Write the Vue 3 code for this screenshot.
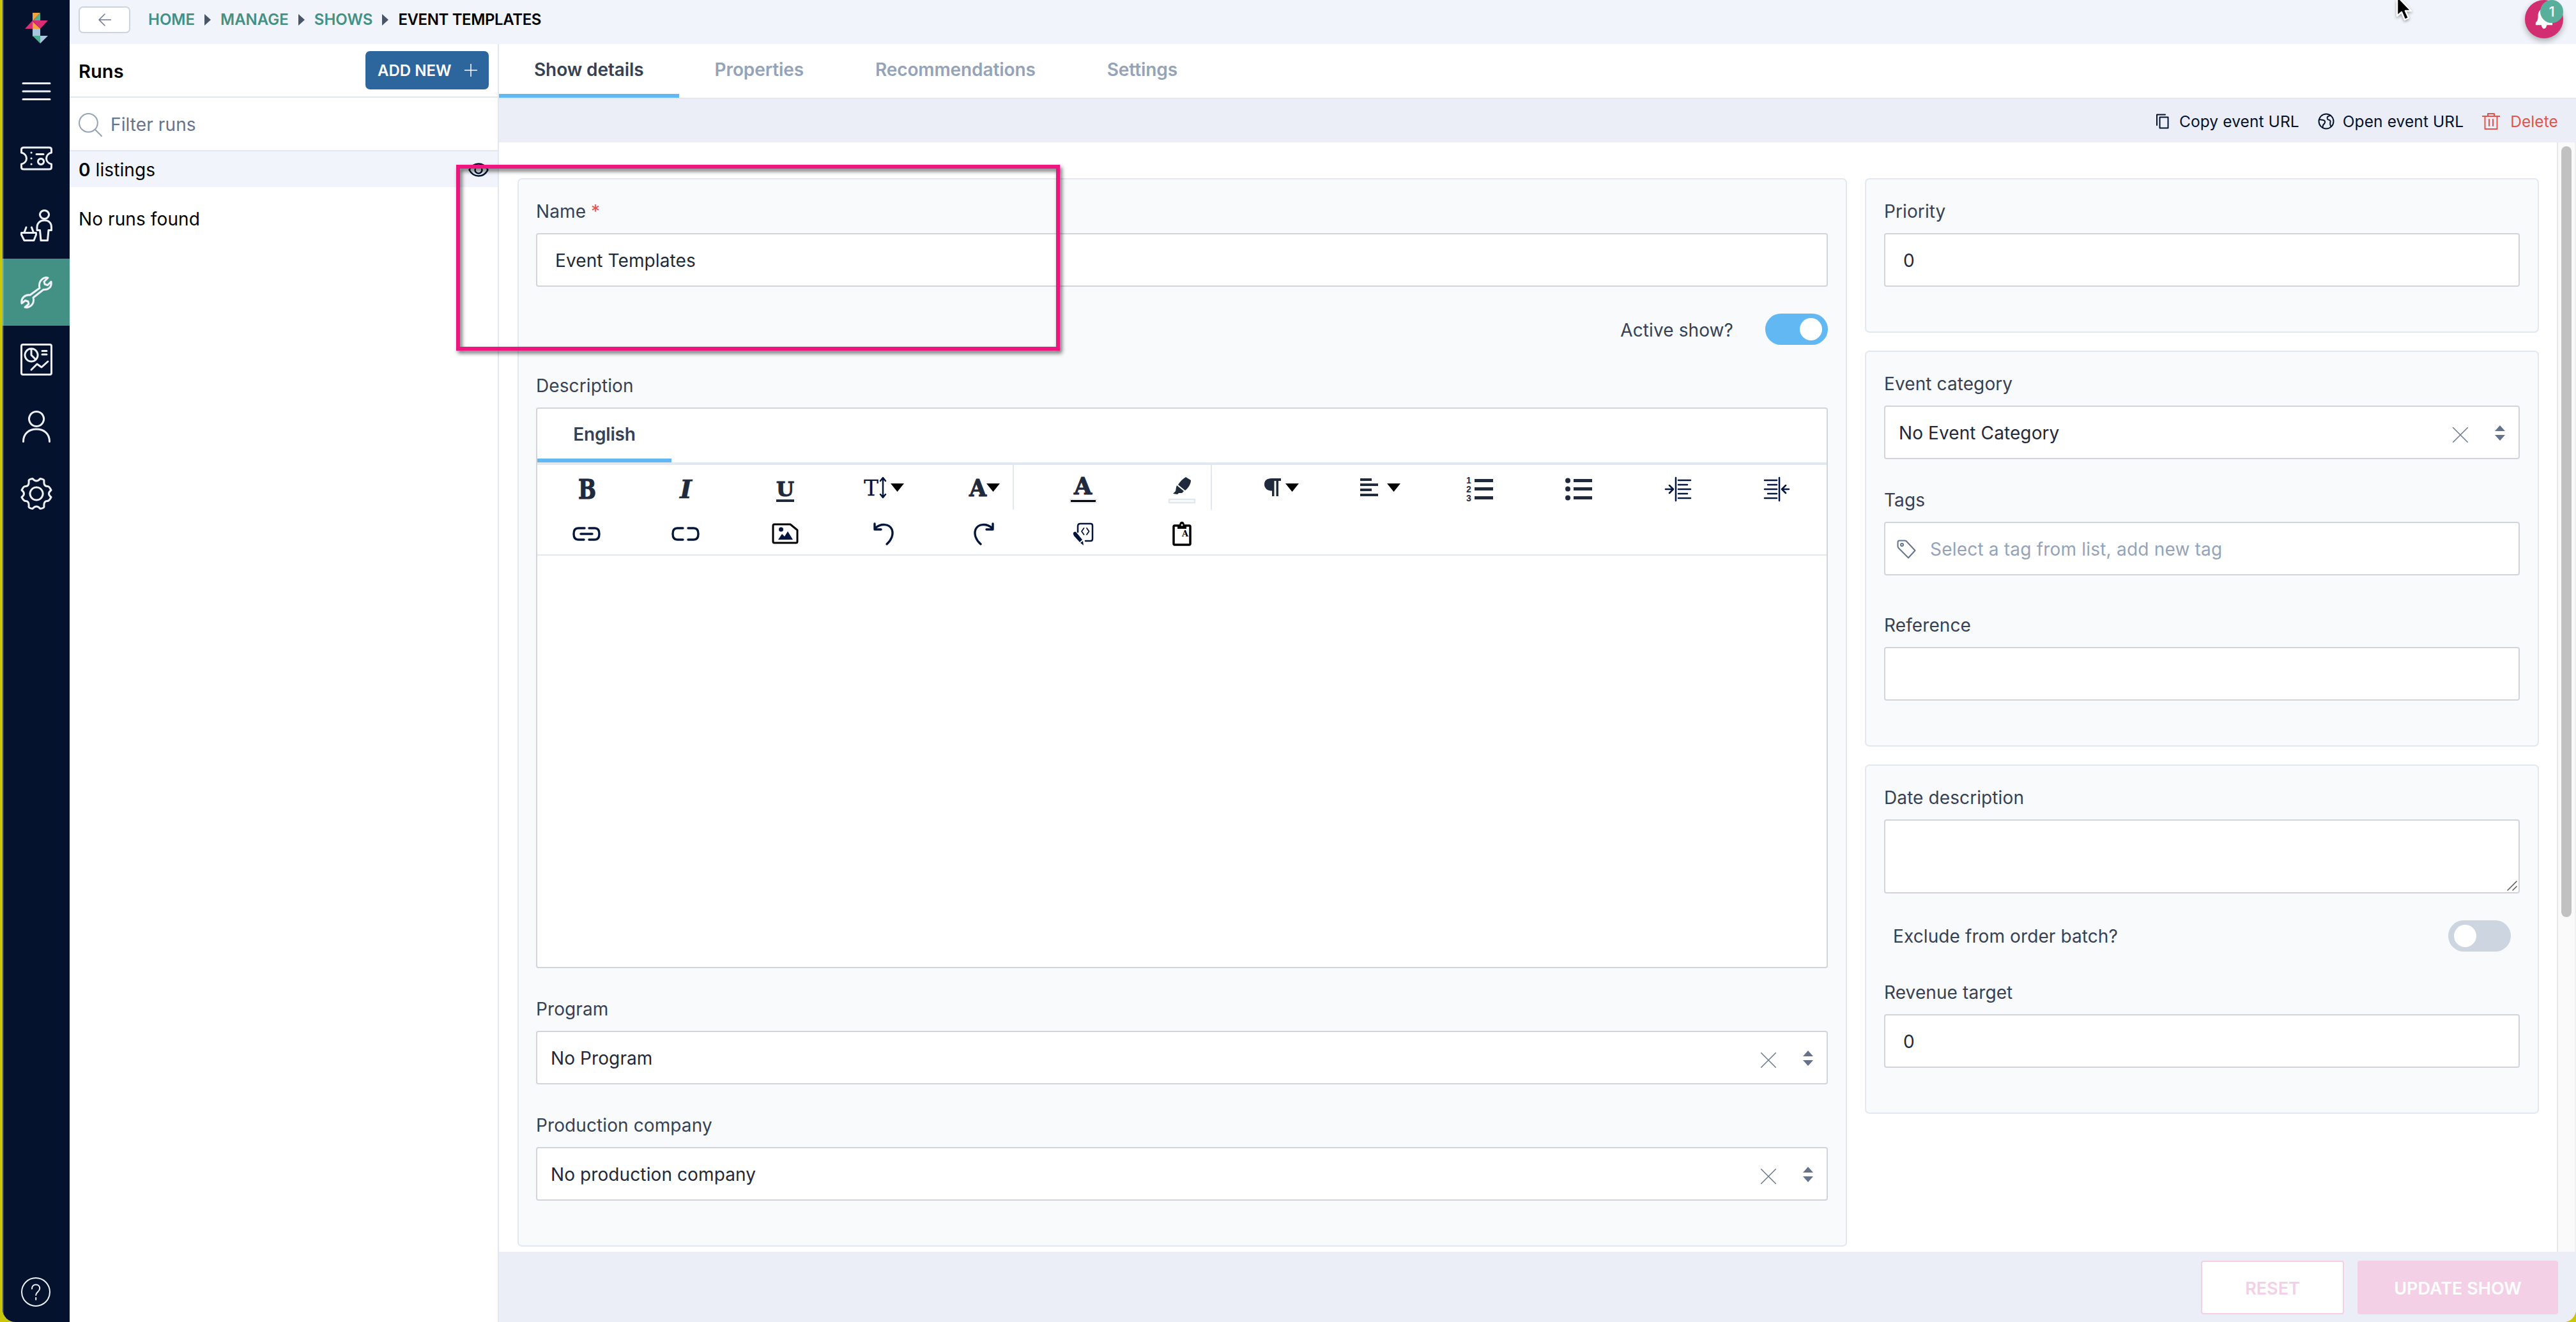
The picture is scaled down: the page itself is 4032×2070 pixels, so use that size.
<template>
  <div class="desktop">
    <div class="window">
      <nav class="sidebar">
        <svg class="logo" viewBox="0 0 36 48">
          <path d="M12 0h12L12 13z" fill="#f2a33a" />
          <path d="M24 0v12H13z" fill="#4fae94" />
          <path d="M12 12h24l-12 13z" fill="#d92e76" />
          <path d="M12 12l-12 13h24z" fill="#d92e76" />
          <path d="M12 14l12 11H12z" fill="#f2a33a" />
          <path d="M12 25h12v12H12z" fill="#a9c6e0" />
          <path d="M12 36h12v12z" fill="#4fae94" />
          <path d="M24 36h12L24 48z" fill="#a9c6e0" />
        </svg>
        <a v-for="item in menu" :key="item.name" class="menu-item" :class="{ active: item.name === 'manage' }">
          <svg class="menu-icon" viewBox="0 0 50 50">
            <path v-for="d in item.paths" :key="d" :d="d" />
          </svg>
        </a>
        <a class="help">
          <svg viewBox="0 0 48 48">
            <circle cx="24" cy="24" r="22" />
            <path d="M18 19c0-4 2.500-6.500 6.200-6.500s6 2.600 6 6c0 5-6 5.500-6 10.500M24.200 33v3" />
          </svg>
        </a>
      </nav>

      <div class="page">
        <header class="topbar">
          <button class="back">
            <svg viewBox="0 0 20 20"><path d="M20 10H1M10 1l-9 9 9 9" /></svg>
          </button>
          <template v-for="crumb in crumbs" :key="crumb">
            <a class="crumb">{{ crumb }}</a>
            <i class="crumb-arrow"></i>
          </template>
          <span class="crumb current">EVENT TEMPLATES</span>
        </header>

        <div class="columns">
          <aside class="runs">
            <div class="runs-header">
              <h2>Runs</h2>
              <button class="add-new">
                ADD NEW
                <svg viewBox="0 0 20 20"><path d="M10 0v20M0 10h20" /></svg>
              </button>
            </div>
            <div class="filter">
              <svg viewBox="0 0 36 36"><circle cx="15" cy="15" r="14" /><path d="M25 25l10 10" /></svg>
              Filter runs
            </div>
            <div class="listings">
              <span><b>0</b> listings</span>
              <svg viewBox="0 0 32 22">
                <path d="M1.500 11C5 4.500 10 1.500 16 1.500S27 4.500 30.500 11C27 17.500 22 20.500 16 20.500S5 17.500 1.500 11z" />
                <circle cx="16" cy="11" r="5.500" />
              </svg>
            </div>
            <p class="no-runs">No runs found</p>
          </aside>

          <main class="main">
            <div class="tabs">
              <a v-for="(tab, i) in tabs" :key="tab" class="tab" :class="{ active: i === 0 }">{{ tab }}</a>
            </div>
            <div class="actions">
              <a class="action copy">
                <svg viewBox="0 0 20 24" width="20" height="24">
                  <path d="M5.500 5.500h13v17h-13zM1 18V1.500h13" />
                </svg>
                Copy event URL
              </a>
              <a class="action open">
                <svg viewBox="0 0 26 26" width="26" height="26">
                  <circle cx="13" cy="13" r="11.500" />
                  <path d="M2 10l6 1c3 .5 4 2.500 2.500 5L8 19l-.5 4M20 4c-5 .5-6.500 3-5 5.500 1.500 2 4 .5 4.500 3 .4 3-1.500 4 .5 7.500" />
                </svg>
                Open event URL
              </a>
              <a class="action delete">
                <svg viewBox="0 0 28 28" width="28" height="28">
                  <path d="M0 6h28M9 6V2h10v4M4.500 6v20h19V6M11 11v10M17 11v10" />
                </svg>
                Delete
              </a>
            </div>

            <div class="content">
              <section class="card left">
                <label>Name <em>*</em></label>
                <div class="input">Event Templates</div>
                <div class="toggle-row end">
                  <span>Active show?</span>
                  <div class="toggle on"><i></i></div>
                </div>

                <label class="gap">Description</label>
                <div class="editor">
                  <div class="lang-tabs"><a class="lang">English</a></div>
                  <div class="toolbar">
                    <div v-for="tool in tools" :key="tool" class="cell">
                      <div class="tool" :class="{ divided: tool === 'font' || tool === 'mark' }">
                        <svg viewBox="0 0 94 70">
                          <text v-if="tool === 'bold'" class="slab" x="33" y="53" font-size="42" textLength="28" lengthAdjust="spacingAndGlyphs">B</text>
                          <text v-else-if="tool === 'italic'" class="slab it" x="37" y="52" font-size="39" textLength="19" lengthAdjust="spacingAndGlyphs">I</text>
                          <g v-else-if="tool === 'underline'">
                            <text class="slab" x="33" y="49" font-size="32" textLength="28" lengthAdjust="spacingAndGlyphs">U</text>
                            <path class="ink" d="M33 54h28v4H33z" />
                          </g>
                          <g v-else-if="tool === 'size'">
                            <text class="slab thin" x="15" y="48" font-size="34" textLength="23" lengthAdjust="spacingAndGlyphs">T</text>
                            <path class="line" d="M45 21v29M41 25l4-5 4 5M41 46l4 5 4-5" />
                            <path d="M57 29h21L67.500 42z" />
                          </g>
                          <g v-else-if="tool === 'font'">
                            <text class="slab" x="24" y="49" font-size="37" textLength="27" lengthAdjust="spacingAndGlyphs">A</text>
                            <path d="M51 29h21L61.500 42z" />
                          </g>
                          <g v-else-if="tool === 'color'">
                            <text class="slab" x="33" y="46" font-size="37" textLength="28" lengthAdjust="spacingAndGlyphs">A</text>
                            <path d="M27 54h41v5H27z" stroke="#e2e8f0" stroke-width="2" />
                          </g>
                          <g v-else-if="tool === 'mark'">
                            <path class="ink" d="M53 19l8 5c0 6-4 12-9 16l-11-9c3-5 7-9 12-12zM39 32l11 9-3 3-5 0-2 2-7-1 4-4 1-6z" />
                            <path d="M27 54h40v5H27z" fill="#fff" stroke="#e2e8f0" stroke-width="2.500" />
                          </g>
                          <g v-else-if="tool === 'paragraph'">
                            <path class="ink" d="M46 21h-13c-9 0-12 4-12 9.500s4 10 12 10V49h3.500V25h3V49H43V25h4v-4z" />
                            <path d="M54 29h21L64.500 42z" />
                          </g>
                          <g v-else-if="tool === 'align'">
                            <path class="ink" d="M16 21h18v4H16zM16 29h28v4H16zM16 37h18v4H16zM16 45h28v4H16z" />
                            <path d="M58 29h21L68.500 42z" />
                          </g>
                          <g v-else-if="tool === 'ordered'">
                            <path class="ink" d="M39 22h29v5H39zM39 35h29v5H39zM39 49h29v5H39z" />
                            <text class="num" x="26" y="29">1</text>
                            <text class="num" x="26" y="43">2</text>
                            <text class="num" x="26" y="57">3</text>
                          </g>
                          <g v-else-if="tool === 'bullets'">
                            <path class="ink" d="M39 22h29v5H39zM39 35h29v5H39zM39 49h29v5H39z" />
                            <circle class="ink" cx="30" cy="24.500" r="4" />
                            <circle class="ink" cx="30" cy="37.500" r="4" />
                            <circle class="ink" cx="30" cy="51.500" r="4" />
                          </g>
                          <path v-else-if="tool === 'indent'" class="line" d="M44 20v36M48 24h19M48 31h14M48 38h19M48 45h14M48 52h19M28 38h11M34 32l6 6-6 6" />
                          <path v-else-if="tool === 'outdent'" class="line" d="M51 20v36M47 24H28M47 31H33M47 38H28M47 45H33M47 52H28M66 38H55M61 32l-6 6 6 6" />
                          <path v-else-if="tool === 'link'" class="line thick" d="M43 29H33q-7 0-7 9t7 9h9M50 29h9q7 0 7 9t-7 9h-9M37 38h18" />
                          <path v-else-if="tool === 'unlink'" class="line thick" d="M42 29H33q-7 0-7 9t7 9h9M50 29h9q7 0 7 9t-7 9h-9" />
                          <g v-else-if="tool === 'image'">
                            <path d="M30 23h25l11 9v18q0 2-2 2H30q-2 0-2-2V25q0-2 2-2z" fill="none" stroke="#000" stroke-width="3" />
                            <path class="ink navy" d="M36 47l6-9 4 4 5-8 8 13z" />
                            <circle class="ink navy" cx="40.500" cy="31" r="3.500" />
                          </g>
                          <path v-else-if="tool === 'undo'" class="line thick" d="M32 22v9h10M33 29c9-8 22-7 26 2 3 8-1 17-8 23" />
                          <path v-else-if="tool === 'redo'" class="line thick" d="M61 22v9H51M60 29c-9-8-22-7-26 2-3 8 1 17 8 23" />
                          <g v-else-if="tool === 'code'">
                            <path class="line" d="M39 35V26q0-4 4-4h16q3 0 3 3v21q0 3-3 3h-8" />
                            <path class="line slim" d="M48.500 29l-3.500 5 3.500 5M53 29l3.500 5-3.500 5" />
                            <path class="ink navy" d="M32 36q3-3 5 0l9 11-4 4-9-10q-2-3-1-5zM43 52l4-3 1 7z" />
                          </g>
                          <g v-else-if="tool === 'paste'">
                            <path d="M35.500 25h23q1.500 0 1.500 2v26q0 2-1.500 2h-23q-1.500 0-1.500-2V27q0-2 1.500-2z" fill="none" stroke="#000" stroke-width="3.500" />
                            <path d="M40 24h3c0-7 8-7 8 0h3v6H40z" />
                            <circle cx="47" cy="24" r="1.500" fill="#fff" />
                            <text class="slab small" x="47" y="42" font-size="13">A</text>
                          </g>
                        </svg>
                      </div>
                    </div>
                  </div>
                </div>

                <template v-for="field in selects" :key="field.label">
                  <label class="gap">{{ field.label }}</label>
                  <div class="input select">
                    <span>{{ field.value }}</span>
                    <svg class="clear" viewBox="0 0 24 24"><path d="M0 0l24 24M24 0L0 24" /></svg>
                    <svg class="sort" viewBox="0 0 16 24"><path d="M8 0l8 9H0zM8 24l8-9H0z" /></svg>
                  </div>
                </template>
              </section>

              <div class="right">
                <section class="card priority">
                  <label>Priority</label>
                  <div class="input">0</div>
                </section>
                <section class="card category">
                  <label>Event category</label>
                  <div class="input select">
                    <span>No Event Category</span>
                    <svg class="clear" viewBox="0 0 24 24"><path d="M0 0l24 24M24 0L0 24" /></svg>
                    <svg class="sort" viewBox="0 0 16 24"><path d="M8 0l8 9H0zM8 24l8-9H0z" /></svg>
                  </div>
                  <label class="gap">Tags</label>
                  <div class="input tags">
                    <svg viewBox="0 0 30 30">
                      <path d="M1.500 4q0-2.500 2.500-2.500h8q2 0 3 1L28.500 17 18 28.500 3 13.500q-1.500-1.500-1.500-3z" />
                      <circle cx="8" cy="8" r="2" />
                    </svg>
                    Select a tag from list, add new tag
                  </div>
                  <label class="gap wide">Reference</label>
                  <div class="input"></div>
                </section>
                <section class="card dates">
                  <label>Date description</label>
                  <div class="input area">
                    <svg viewBox="0 0 16 16"><path d="M1 15L15 1M9 15l6-6" /></svg>
                  </div>
                  <div class="toggle-row batch">
                    <span>Exclude from order batch?</span>
                    <div class="toggle"><i></i></div>
                  </div>
                  <label class="gap">Revenue target</label>
                  <div class="input">0</div>
                </section>
              </div>

              <div class="scrollbar"><i></i></div>
            </div>

            <footer class="footer">
              <button class="reset">RESET</button>
              <button class="update">UPDATE SHOW</button>
            </footer>
          </main>
        </div>
      </div>
    </div>

    <div class="bell">
      <svg viewBox="0 0 28 34"><path d="M14 0c-7 1-10 6-10 12 0 7-1 9-4 12v4h9.500q1 6 4.500 6t4.500-6H28v-4c-3-3-4-5-4-12C24 6 21 1 14 0z" /></svg>
      <span class="badge">1</span>
    </div>
    <svg class="cursor" viewBox="0 0 30 40">
      <path d="M4 -6v31l7-6 5 12 6-3-5-11h9z" />
    </svg>
    <div class="highlight"></div>
  </div>
</template>

<script setup>
const menu = [
  { name: "menu", paths: ["M4 12.500h42M4 25h42M4 37.500h42"] },
  {
    name: "tickets",
    paths: [
      "M5 8h40q3.500 0 3.500 3v5c-4 1-8 4-8 9s4 8 8 9v5q0 3-3.500 3H5q-3.500 0-3.500-3v-5c4-1 8-4 8-9s-4-8-8-9v-5q0-3 3.500-3z",
      "M17 16h.1M17 25h.1M17 34h.1M25 18.500h11",
      "M32 25.500a4.500 4.500 0 1 0 .1 0z"
    ]
  },
  {
    name: "customers",
    paths: [
      "M37.500 1.500a7 6.500 0 1 0 .1 0z",
      "M32 48.500l-1.500-16H26V28c0-7 5-11 11.500-11S48.500 21 48.500 28v4.500H44l-1.500 16z",
      "M1.500 36.500h23v3l-3.500 9H6l-4.500-9zM6 36l3-8M20.500 36l-3-8"
    ]
  },
  {
    name: "manage",
    paths: [
      "M15 29l15-11c-2-8 2-15 10-16.500l3 .5-6 6 1 4 4.500 1.500L48 8c1.500 8-4 13-12 12.500L20 33c2 8-2 14-10 15.500l-3-.5 6-5-1-4-4.500-1.500L2 42c-1.500-8 5-14 13-13z"
    ]
  },
  {
    name: "reports",
    paths: [
      "M4 1.500h42q2.500 0 2.500 2.500v42q0 2.500-2.500 2.500H4q-2.500 0-2.500-2.500V4q0-2.500 2.500-2.500z",
      "M17 8a10 10 0 1 0 .1 0zM17 8v10l7 7",
      "M34 11.500h7M34 17h7M17 41l9-9 7 5 10-9"
    ]
  },
  { name: "account", paths: ["M25 1.500a11.500 11.500 0 1 0 .1 0z", "M4.500 48.500C4.500 36 13 29 25 29s20.500 7 20.500 19.500"] },
  {
    name: "settings",
    paths: [
      "M19 1.500q6 7 12 0 6 1 6 3-1 9 5 9 3-.5 6 6-7 5.500 0 11-3 6-6 6-6 0-5 9 0 2-6 3-6-7-12 0-6-1-6-3 1-9-5-9-3 0-6-6 7-5.500 0-11 3-6.500 6-6 6 0 5-9 0-2 6-3z",
      "M25 15a10 10 0 1 0 .1 0z"
    ]
  }
]

const crumbs = ["HOME", "MANAGE", "SHOWS"]
const tabs = ["Show details", "Properties", "Recommendations", "Settings"]

const tools = [
  "bold", "italic", "underline", "size", "font", "color", "mark",
  "paragraph", "align", "ordered", "bullets", "indent", "outdent",
  "link", "unlink", "image", "undo", "redo", "code", "paste"
]

const selects = [
  { label: "Program", value: "No Program" },
  { label: "Production company", value: "No production company" }
]
</script>

<style>
body {
  margin: 0;
  overflow: hidden;
}
</style>

<style scoped>
* {
  box-sizing: border-box;
}

.desktop {
  position: relative;
  width: 4032px;
  height: 2070px;
  padding-left: 4px;
  overflow: hidden;
  background: #c9c60c;
  font-family: Inter, "Liberation Sans", sans-serif;
  font-size: 28px;
  line-height: 40px;
  letter-spacing: 0.1px;
  color: #1f2937;
}

svg {
  display: block;
  flex: none;
  fill: none;
  stroke-linecap: round;
  stroke-linejoin: round;
}

button {
  font-family: inherit;
  cursor: pointer;
}

.window {
  display: flex;
  height: 2070px;
  border-radius: 0 0 20px 20px;
  overflow: hidden;
  background: #fff;
}

/* sidebar */
.sidebar {
  display: flex;
  flex-direction: column;
  width: 105px;
  background: #04122e;
  box-shadow: inset 2px 0 0 #36435a;
}

.logo {
  width: 36px;
  height: 48px;
  margin: 20px 0 22px 35px;
}

.menu-item {
  display: flex;
  align-items: center;
  justify-content: center;
  height: 105px;
}

.menu-item.active {
  background: #439184;
  box-shadow: inset 2px 0 0 #6aa99f;
}

.menu-icon {
  width: 50px;
  height: 50px;
  stroke: #eef1f8;
  stroke-width: 3;
}

.help {
  margin: auto 0 23px 28px;
}

.help svg {
  width: 48px;
  height: 48px;
  stroke: #eef1f8;
  stroke-width: 2;
}

.page {
  flex: 1;
  display: flex;
  flex-direction: column;
}

/* top bar */
.topbar {
  display: flex;
  align-items: center;
  height: 69px;
  padding: 0 0 7px 14px;
  background: #f1f4fa;
}

.back {
  display: flex;
  align-items: center;
  justify-content: center;
  width: 81px;
  height: 42px;
  margin-right: 28px;
  padding: 0;
  background: #fff;
  border: 2px solid #cbd5e0;
  border-radius: 7px;
}

.back svg {
  width: 20px;
  height: 20px;
  stroke: #6b7890;
  stroke-width: 1.500;
}

.crumb {
  font-size: 24px;
  font-weight: 600;
  letter-spacing: 0;
  color: #439184;
}

.crumb.current {
  letter-spacing: -0.4px;
  color: #000;
}

.crumb-arrow {
  margin: 0 15px;
  border: solid transparent;
  border-width: 9px 0 9px 10px;
  border-left-color: #4a5568;
}

.columns {
  flex: 1;
  display: flex;
}

/* runs */
.runs {
  width: 672px;
  border-right: 2px solid #e2e8f0;
  color: #000;
}

.runs-header {
  display: flex;
  align-items: center;
  justify-content: space-between;
  height: 84px;
  padding: 0 14px;
  border-bottom: 2px solid #e2e8f0;
}

.runs-header h2 {
  margin: 3px 0 0;
  font-size: 29px;
  font-weight: 600;
}

.add-new {
  display: flex;
  align-items: center;
  justify-content: space-between;
  width: 193px;
  height: 60px;
  padding: 0 18px 0 19px;
  background: #2c669d;
  border: 0;
  border-radius: 7px;
  color: #fff;
  font-size: 24px;
  font-weight: 600;
}

.add-new svg {
  width: 20px;
  height: 20px;
  stroke: #fff;
  stroke-width: 1.500;
}

.filter {
  display: flex;
  align-items: center;
  gap: 13px;
  height: 84px;
  padding: 2px 0 0 14px;
  border-bottom: 2px solid #e2e8f0;
  color: #66738a;
}

.filter svg {
  width: 37px;
  height: 37px;
  stroke: #94a3b8;
  stroke-width: 2;
}

.listings {
  display: flex;
  align-items: center;
  justify-content: space-between;
  height: 56px;
  padding: 2px 14px 0;
  background: #f1f4fa;
}

.listings b {
  font-weight: 600;
}

.listings svg {
  width: 32px;
  height: 22px;
  stroke: #04122e;
  stroke-width: 2.500;
}

.no-runs {
  margin: 30px 14px;
}

/* main */
.main {
  flex: 1;
  display: flex;
  flex-direction: column;
}

.tabs {
  display: flex;
  height: 86px;
  border-bottom: 2px solid #e2e8f0;
}

.tab {
  display: flex;
  align-items: center;
  padding: 2px 56px 0;
  border-bottom: 6px solid transparent;
  color: #94a3b8;
  font-weight: 600;
  letter-spacing: -0.1px;
}

.tab.active {
  padding: 2px 55px 0;
  color: #364154;
  border-color: #61b8f2;
}

.actions {
  display: flex;
  align-items: center;
  justify-content: flex-end;
  height: 68px;
  padding: 2px 28px 0 0;
  background: #ebeef7;
  font-size: 24.500px;
  color: #04122e;
}

.action {
  display: flex;
  align-items: center;
  gap: 16px;
  margin-left: 29px;
}

.action svg {
  stroke: #04122e;
  stroke-width: 2;
}

.action.open {
  gap: 13px;
}

.action.delete {
  color: #e5534b;
}

.action.delete svg {
  stroke: #e5534b;
}

.content {
  display: flex;
  align-items: flex-start;
  height: 1737px;
  padding: 56px 0 0 29px;
  position: relative;
}

.card {
  padding: 30px 28px 0;
  background: #f8fafc;
  border: 2px solid #e2e8f0;
  border-radius: 7px;
}

.card.left {
  width: 2081px;
  height: 1673px;
  padding-left: 27px;
}

.right {
  display: flex;
  flex-direction: column;
  gap: 28px;
  width: 1055px;
  margin-left: 28px;
}

.priority {
  height: 242px;
}

.category {
  height: 620px;
}

.dates {
  height: 547px;
}

label {
  display: block;
  height: 40px;
  margin-bottom: 14px;
  color: #364154;
}

label em {
  font-style: normal;
  color: #e5534b;
}

label.gap {
  margin-top: 44px;
}

label.wide {
  margin-top: 58px;
}

.input {
  display: flex;
  align-items: center;
  height: 84px;
  padding: 2px 0 0 28px;
  background: #fff;
  border: 2px solid #d1d5db;
  border-radius: 4px;
}

.select {
  padding: 2px 21px 0;
}

.select span {
  flex: 1;
}

.clear {
  width: 24px;
  height: 24px;
  margin: 6px 42px 0 0;
  stroke: #6b7890;
  stroke-width: 1.500;
}

.sort {
  width: 16px;
  height: 24px;
  fill: #64738b;
}

.tags {
  gap: 22px;
  padding-left: 18px;
  letter-spacing: 0.2px;
  color: #94a3b8;
}

.tags svg {
  width: 30px;
  height: 30px;
  stroke: #64738b;
  stroke-width: 2;
}

.area {
  height: 116px;
  align-items: flex-end;
  justify-content: flex-end;
  padding: 2px;
}

.area svg {
  width: 16px;
  height: 16px;
  stroke: #555;
  stroke-width: 1.500;
}

.toggle-row {
  display: flex;
  align-items: center;
  gap: 50px;
  height: 49px;
  margin-top: 42px;
  margin-bottom: 44px;
  color: #364154;
}

.toggle-row span {
  padding-top: 2px;
}

.toggle-row + label.gap {
  margin-top: 0;
}

.toggle-row.end {
  justify-content: flex-end;
}

.toggle-row.batch {
  justify-content: space-between;
  margin-top: 41px;
  height: 50px;
  padding: 0 14px;
}

.toggle {
  display: flex;
  width: 98px;
  height: 49px;
  padding: 7px 9px;
  background: #ccd5e0;
  border-radius: 25px;
}

.toggle i {
  width: 35px;
  height: 35px;
  background: #fff;
  border-radius: 50%;
}

.toggle.on {
  justify-content: flex-end;
  background: #61b8f2;
}

/* editor */
.editor {
  height: 878px;
  background: #fff;
  border: 2px solid #d1d5db;
  border-radius: 4px;
}

.lang-tabs {
  display: flex;
  height: 88px;
  border-bottom: 4px solid #e2e8f0;
}

.lang {
  display: flex;
  align-items: center;
  justify-content: center;
  width: 210px;
  padding-top: 2px;
  border-bottom: 6px solid #61b8f2;
  color: #364154;
  font-weight: 600;
  letter-spacing: -0.2px;
}

.toolbar {
  display: grid;
  grid-template-columns: repeat(13, 1fr);
  grid-auto-rows: 70px;
  height: 142px;
  border-bottom: 2px solid #e2e8f0;
}

.cell {
  display: flex;
  justify-content: center;
}

.tool {
  width: 94px;
}

.tool.divided {
  box-shadow: inset -2px 0 0 #e2e8f0;
}

.tool svg {
  width: 94px;
  height: 70px;
  fill: #000;
}

.ink {
  fill: #1f2a3c;
}

.ink.navy {
  fill: #04163c;
}

.line {
  fill: none;
  stroke: #04163c;
  stroke-width: 2.500;
}

.line.thick {
  stroke-width: 3.400;
}

.line.slim {
  stroke-width: 1.800;
}

.slab {
  font-family: "DejaVu Serif", serif;
  font-weight: 700;
  letter-spacing: 0;
  fill: #1f2a3c;
  stroke: #1f2a3c;
  stroke-width: 1.200;
}

.slab.it {
  font-style: italic;
  stroke-width: 0.500;
}

.slab.thin {
  font-weight: 400;
  fill: #04163c;
  stroke-width: 0.300;
}

.slab.small {
  fill: #000;
  stroke: none;
}

.num {
  font-family: "Liberation Sans", sans-serif;
  font-size: 14px;
  font-weight: 700;
  fill: #1f2a3c;
}

.scrollbar {
  display: flex;
  justify-content: center;
  align-self: stretch;
  width: 30px;
  margin: -56px 0 0 28px;
  padding-top: 6px;
  background: #fafafa;
  border-left: 2px solid #e8e8e8;
  border-right: 2px solid #f0f0f0;
}

.scrollbar i {
  width: 16px;
  height: 1207px;
  background: #c1c1c1;
  border-radius: 8px;
}

/* footer */
.footer {
  flex: 1;
  display: flex;
  gap: 21px;
  justify-content: flex-end;
  padding: 14px 28px 0 0;
  background: #ebeef7;
}

.footer button {
  height: 84px;
  padding: 2px 0 0;
  border: 2px solid #f4d0e6;
  border-radius: 4px;
  font-size: 27px;
  font-weight: 600;
}

.footer .reset {
  width: 224px;
  background: #fff;
  color: #f4d0e6;
}

.footer .update {
  width: 314px;
  background: #f4d0e6;
  color: #fff;
}

/* floating things */
.bell {
  position: absolute;
  top: 0;
  left: 3952px;
  display: flex;
  align-items: flex-end;
  justify-content: center;
  width: 60px;
  height: 60px;
  padding-bottom: 15px;
  background: #d12d70;
  border-radius: 50%;
  box-shadow: 0 4px 10px rgba(0, 0, 0, 0.3);
}

.bell svg {
  width: 28px;
  height: 32px;
  fill: #fff;
}

.badge {
  position: absolute;
  top: 0;
  right: 0;
  width: 36px;
  height: 36px;
  background: #58b09c;
  border-radius: 50%;
  color: #fff;
  font-size: 22px;
  font-weight: 500;
  line-height: 36px;
  text-align: center;
}

.cursor {
  position: absolute;
  top: 0;
  left: 3748px;
  width: 30px;
  height: 40px;
  fill: #000;
  stroke: #fff;
  stroke-width: 2.500;
  filter: drop-shadow(0 2px 2px rgba(0, 0, 0, 0.35));
}

.highlight {
  position: absolute;
  top: 258px;
  left: 714px;
  width: 945px;
  height: 291px;
  border: 6px solid #ee1581;
  filter: drop-shadow(3px 4px 3px rgba(0, 0, 0, 0.6));
}
</style>
